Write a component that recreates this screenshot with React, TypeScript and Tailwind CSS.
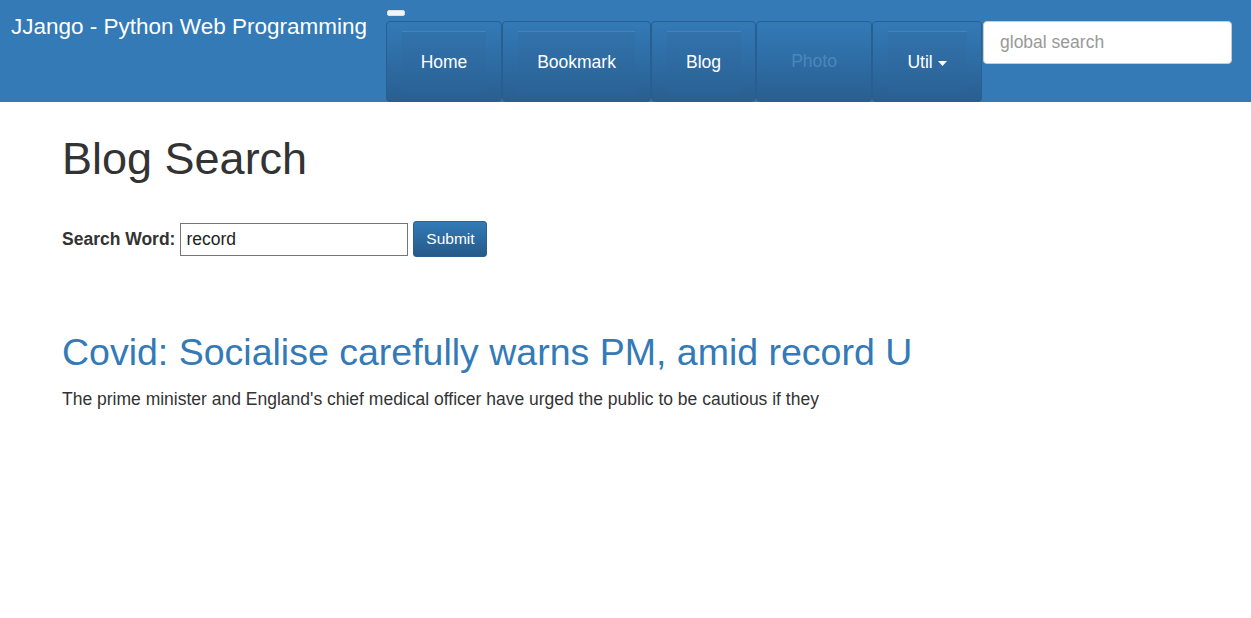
const navItems = [
  { label: "Home", width: "w-[116px]", inner: "w-[84px]" },
  { label: "Bookmark", width: "w-[149px]", inner: "w-[117px]" },
  { label: "Blog", width: "w-[105px]", inner: "w-[74px]" },
  { label: "Photo", width: "w-[116px]", muted: true },
  { label: "Util", width: "w-[110px]", inner: "w-[79px]", caret: true },
]

export default function App() {
  return (
    <div className="min-h-[618px] bg-white font-['Liberation_Sans',Arial,sans-serif] text-[#333]">
      {/* Navbar */}
      <div className="flex h-[102px] bg-[#337ab7]">
        <div className="pl-[11px] pt-[13px] pr-[19px] text-[22.5px] leading-[28px] text-white">
          JJango - Python Web Programming
        </div>
        <div className="flex flex-col">
          <div className="mt-[10px] ml-px h-[6px] w-[18px] rounded-[2px] border border-[#ddd] bg-[#f4f4f4]" />
          <div className="mt-[5px] flex">
            {navItems.map((item) => (
              <div
                key={item.label}
                className={`${item.width} flex h-[81px] items-center justify-center rounded-[4px] border border-[#285f90] bg-gradient-to-b from-[#337ab7] to-[#295f91]`}
              >
                {item.muted ? (
                  <span className="text-[17.5px] text-[#4d86ba]">{item.label}</span>
                ) : (
                  <div
                    className={`${item.inner} flex h-[62px] items-center justify-center border-t border-[#4683bb] bg-gradient-to-b from-[#3272ab] to-[#2a6397] text-[17.5px] text-white`}
                  >
                    {item.label}
                    {item.caret && (
                      <svg className="ml-[5px] mt-[2px]" width="9" height="5" viewBox="0 0 9 5">
                        <path d="M0 0h9L4.5 5z" fill="white" />
                      </svg>
                    )}
                  </div>
                )}
              </div>
            ))}
          </div>
        </div>
        <div className="ml-px mt-[21px] flex h-[43px] w-[249px] items-center rounded-[4px] border border-[#ccc] bg-white px-[16px] text-[17.5px] text-[#999]">
          global search
        </div>
      </div>

      {/* Content */}
      <div className="px-[62px]">
        <h1 className="mt-[30px] text-[45px] leading-[54px] text-[#333]">Blog Search</h1>

        <div className="mt-[35px] flex items-center">
          <span className="text-[17.5px] font-bold">Search Word:</span>
          <div className="ml-[5px] flex h-[33px] w-[228px] items-center border border-[#767676] px-[5px] text-[17.5px] text-[#222]">
            record
          </div>
          <div className="ml-[5px] flex h-[36px] w-[74px] items-center justify-center rounded-[3px] border border-[#2a5f8f] bg-gradient-to-b from-[#337ab7] to-[#265a88] text-[15.5px] text-white">
            Submit
          </div>
        </div>

        <h2 className="mt-[73px] text-[37.5px] leading-[44px] text-[#337ab7]">
          Covid: Socialise carefully warns PM, amid record U
        </h2>
        <p className="mt-[13px] text-[17.5px] leading-[24px] text-[#333]">
          The prime minister and England's chief medical officer have urged the public to be cautious if they
        </p>
      </div>
    </div>
  )
}
